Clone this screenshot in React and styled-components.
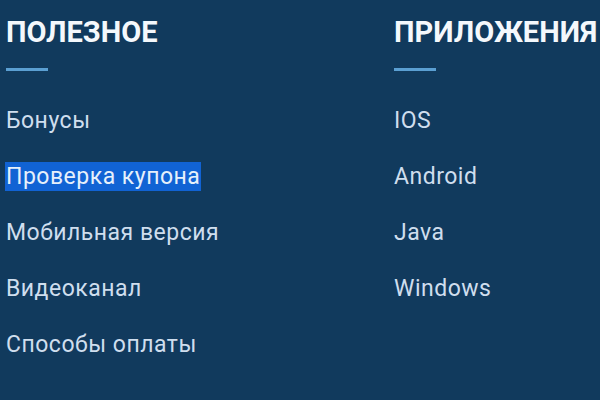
import styled, { createGlobalStyle } from "styled-components";

const GlobalStyle = createGlobalStyle`
  html, body {
    margin: 0;
    padding: 0;
    background: #113a5d;
  }
  body {
    font-family: Roboto, "Liberation Sans", sans-serif;
  }
`;

const columns = [
  {
    title: "ПОЛЕЗНОЕ",
    links: [
      { label: "Бонусы" },
      { label: "Проверка купона", selected: true },
      { label: "Мобильная версия" },
      { label: "Видеоканал" },
      { label: "Способы оплаты" },
    ],
  },
  {
    title: "ПРИЛОЖЕНИЯ",
    links: [
      { label: "IOS" },
      { label: "Android" },
      { label: "Java" },
      { label: "Windows" },
    ],
  },
];

const App = () => {
  return (
    <>
      <GlobalStyle />
      <Footer>
        {columns.map((col) => (
          <Column key={col.title}>
            <Title>{col.title}</Title>
            <Line />
            <Links>
              {col.links.map((link) => (
                <LinkItem key={link.label}>
                  <LinkText selected={link.selected}>{link.label}</LinkText>
                </LinkItem>
              ))}
            </Links>
          </Column>
        ))}
      </Footer>
    </>
  );
};

const Footer = styled.footer`
  width: 600px;
  height: 400px;
  box-sizing: border-box;
  display: grid;
  grid-template-columns: 388px 1fr;
  padding: 15px 0 0 6px;
  overflow: hidden;
`;

const Column = styled.div`
  display: flex;
  flex-direction: column;
`;

const Title = styled.h3`
  margin: 0;
  font-size: 29px;
  line-height: 34px;
  font-weight: 700;
  color: #f4f8fc;
  white-space: nowrap;
`;

const Line = styled.span`
  display: block;
  width: 42px;
  height: 3px;
  margin-top: 19px;
  background: #5b9fd2;
`;

const Links = styled.ul`
  list-style: none;
  margin: 35px 0 0;
  padding: 0;
  display: flex;
  flex-direction: column;
  gap: 27px;
`;

const LinkItem = styled.li`
  height: 29px;
  display: flex;
  align-items: center;
`;

const LinkText = styled.span`
  font-size: 23px;
  line-height: 29px;
  letter-spacing: 0.5px;
  color: ${({ selected }) => (selected ? "#e6f0fb" : "#cfdeee")};
  margin-left: -1px;
  padding: 0 1px;
  white-space: nowrap;
  background: ${({ selected }) => (selected ? "#1163d4" : "transparent")};
`;

export default App;
